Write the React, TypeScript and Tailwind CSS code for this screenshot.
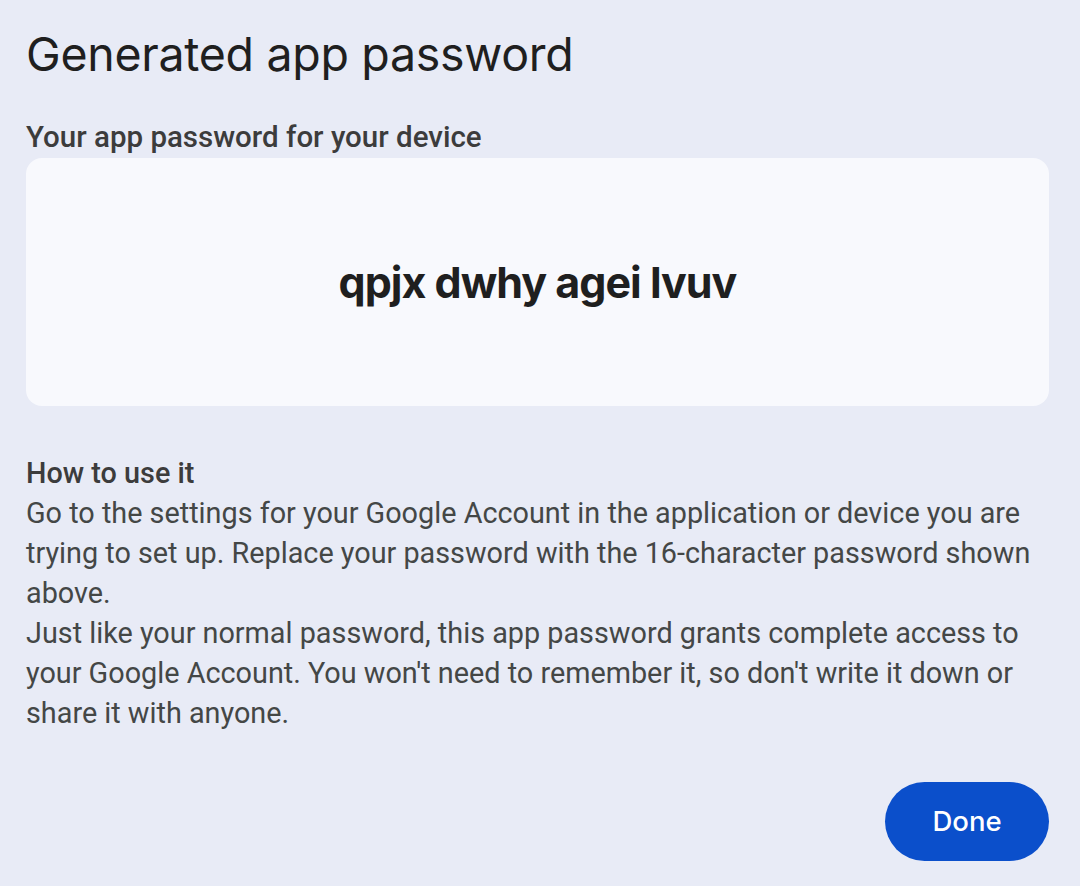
export default function App() {
    return (
        <main className="min-h-screen w-full bg-[#e8ebf6] text-[#444746] font-['Roboto',sans-serif]">
            <div className="flex flex-col pl-[26px] pr-[31px] pt-[24px]">
                <h1 className="text-[46.5px] leading-[60px] text-[#1f1f1f] font-['Inter',sans-serif] font-normal tracking-[-0.3px]">
                    Generated app password
                </h1>

                <h2 className="mt-[35px] text-[29.5px] leading-[36px] font-medium text-[#3c3c3c]">
                    Your app password for your device
                </h2>

                <div className="mt-[3px] h-[248px] w-full rounded-[16px] bg-[#f8f9fd] flex items-center justify-center">
                    <span className="text-[43px] font-bold text-[#1f1f1f] font-['Inter',sans-serif] tracking-[-1px]">
                        qpjx dwhy agei lvuv
                    </span>
                </div>

                <div className="mt-[47px] text-[28.8px] leading-[40px]">
                    <h3 className="font-medium text-[#3c3c3c]">How to use it</h3>
                    <p>
                        Go to the settings for your Google Account in the application or device you are trying to set up. Replace your password with the 16-character password shown above.
                    </p>
                    <p>
                        Just like your normal password, this app password grants complete access to your Google Account. You won't need to remember it, so don't write it down or share it with anyone.
                    </p>
                </div>

                <div className="mt-[49px] flex justify-end">
                    <button className="h-[79px] w-[164px] rounded-full bg-[#0b4fcb] text-white text-[27.5px] font-medium font-['Inter',sans-serif]">
                        Done
                    </button>
                </div>
            </div>
        </main>
    );
}
